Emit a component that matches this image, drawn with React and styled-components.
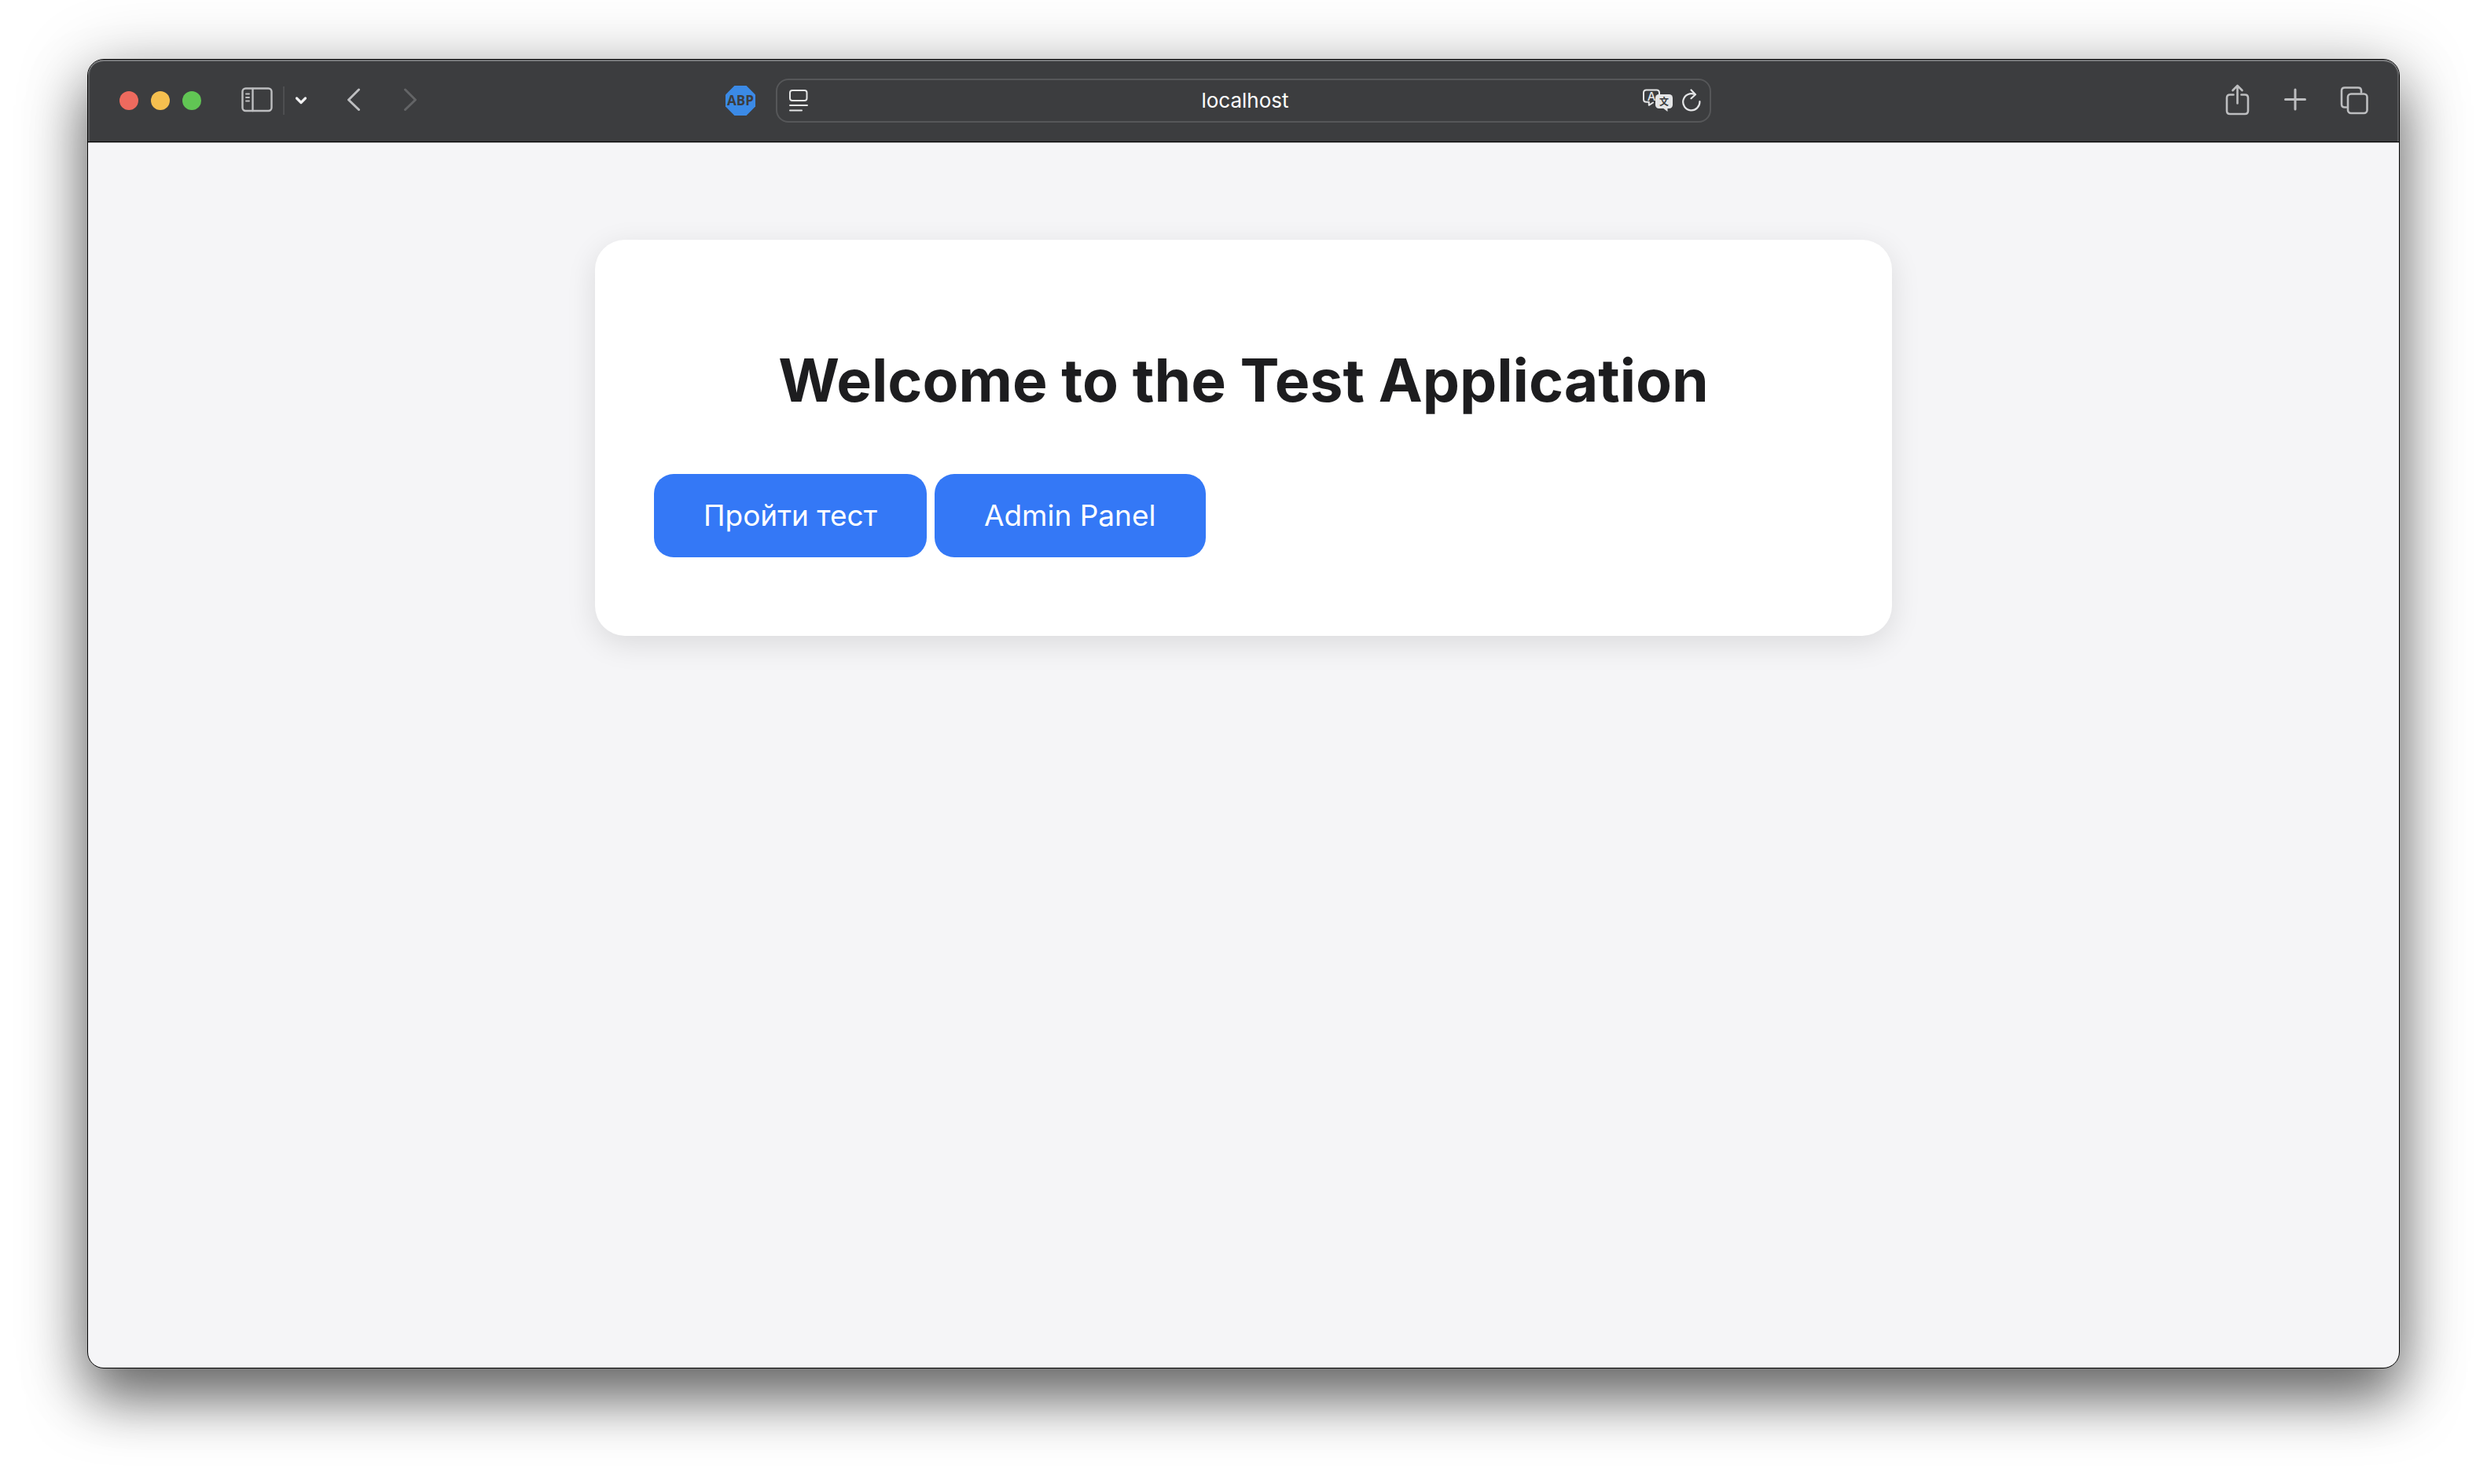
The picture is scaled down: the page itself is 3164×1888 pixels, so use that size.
import React from "react";
import styled, { createGlobalStyle } from "styled-components";

const GlobalStyle = createGlobalStyle`
  * { box-sizing: border-box; }
  body {
    margin: 0;
    background: #ffffff;
    font-family: Inter, "Liberation Sans", sans-serif;
  }
  button, input { font: inherit; }
`;

const Desktop = styled.div`
  display: flex;
  min-height: 100vh;
  padding: 75px 111px 147px;
`;

const Window = styled.div`
  flex: 1;
  display: flex;
  flex-direction: column;
  min-width: 0;
  border: 1px solid #000000;
  border-radius: 21px;
  background: #f5f5f7;
  box-shadow: 0 40px 70px rgba(0, 0, 0, 0.5), 0 10px 90px rgba(0, 0, 0, 0.25);
`;

const Toolbar = styled.header`
  display: grid;
  grid-template-columns: 1fr minmax(0, 1190px) 1fr;
  align-items: center;
  height: 104px;
  border-radius: 20px 20px 0 0;
  background: #3c3d3f;
  color: #bdbec0;
  box-shadow: inset 0 2px 0 #77787a, inset 2px 0 0 #5c5d5f, inset -2px 0 0 #5c5d5f;
`;

const Side = styled.div`
  display: flex;
  align-items: center;
  justify-content: ${(p) => (p.$end ? "flex-end" : "flex-start")};
  padding: ${(p) => (p.$end ? "0 39px 0 0" : "0 26px 0 40px")};
`;

const Lights = styled.div`
  display: flex;
  gap: 16px;
  margin-right: 51px;
`;

const Light = styled.button`
  width: 24px;
  height: 24px;
  padding: 0;
  border: 0;
  border-radius: 50%;
  background: ${(p) => p.$color};
`;

const IconButton = styled.button`
  display: flex;
  align-items: center;
  justify-content: center;
  flex: none;
  width: ${(p) => p.$width}px;
  height: 48px;
  padding: 0;
  border: 0;
  background: none;
  color: ${(p) => p.$color || "inherit"};
  margin-left: ${(p) => p.$gap || 0}px;
`;

const Divider = styled.span`
  width: 2px;
  height: 36px;
  margin: 0 11px 0 13px;
  background: #4e4f51;
`;

const Blocker = styled.button`
  width: 38px;
  height: 38px;
  margin-left: auto;
  padding: 0;
  border: 0;
  background: #3b8ae6;
  color: #3c3d3f;
  clip-path: polygon(30% 0, 70% 0, 100% 30%, 100% 70%, 70% 100%, 30% 100%, 0 70%, 0 30%);
  font: 700 17px/38px "Open Sans", sans-serif;
`;

const AddressBar = styled.div`
  display: grid;
  grid-template-columns: 1fr minmax(0, 600px) 1fr;
  align-items: center;
  height: 56px;
  padding: 0 9px 0 13px;
  border: 2px solid #565759;
  border-radius: 16px;
  color: #e4e5e6;
`;

const Address = styled.input`
  width: 100%;
  padding: 0;
  border: 0;
  outline: 0;
  background: transparent;
  color: #ffffff;
  font-size: 26px;
  line-height: 32px;
  text-align: center;
`;

const AddressActions = styled.div`
  display: flex;
  justify-content: flex-end;
`;

const Page = styled.main`
  flex: 1;
  padding: 124px 75px;
  border-top: 1px solid #000000;
  border-radius: 0 0 20px 20px;
  box-shadow: inset 0 1px 0 #b4b4b6;
`;

const Card = styled.section`
  max-width: 1650px;
  margin: 0 auto;
  padding: 75px 75px 100px;
  border-radius: 38px;
  background: #ffffff;
  box-shadow: 0 10px 38px rgba(0, 0, 0, 0.11);
`;

const Title = styled.h1`
  margin: 56px 0 71px;
  color: #1d1d1f;
  font-size: 75px;
  font-weight: 700;
  line-height: 96px;
  text-align: center;
`;

const Actions = styled.div`
  display: flex;
  flex-wrap: wrap;
  gap: 10px;
`;

const ActionButton = styled.button`
  height: 106px;
  padding: 0 63px;
  border: 0;
  border-radius: 25px;
  background: #3478f6;
  color: #ffffff;
  font-size: 37px;
  line-height: 48px;
`;

const Svg = ({ w, h, s = 2, children }) => (
  <svg width={w} height={h} viewBox={`0 0 ${w} ${h}`} fill="none" stroke="currentColor"
    strokeWidth={s} strokeLinecap="round" strokeLinejoin="round" aria-hidden="true">
    {children}
  </svg>
);

const SidebarIcon = () => (
  <Svg w={40} h={34} s={2.4}>
    <rect x="1.5" y="1.500" width="37" height="28.5" rx="4" />
    <path d="M14.5 2v28" />
    <path d="M6 8.5h4M6 13h4M6 17.5h4" strokeWidth="1.8" />
  </Svg>
);

const ChevronDown = () => (
  <Svg w={16} h={12} s={3.2}><path d="M2.5 3l5.5 5.5L13.5 3" /></Svg>
);

const Back = () => <Svg w={18} h={32} s={3}><path d="M15.5 2L2.5 15l13 12.5" /></Svg>;
const Forward = () => <Svg w={18} h={32} s={3}><path d="M2.5 2l13 13-13 12.5" /></Svg>;

const ReaderIcon = () => (
  <Svg w={24} h={30}>
    <rect x="1" y="2" width="21.5" height="13" rx="3" />
    <path d="M1 21h22M1 27.5h15" />
  </Svg>
);

const TranslateIcon = () => (
  <Svg w={40} h={32}>
    <path d="M14 18.5L8.8 21.8V17.8H5.5Q2 17.8 2 14.3V6Q2 2.5 5.5 2.5H18.5Q22 2.5 22 6V8" />
    <rect x="17" y="8" width="22" height="18" rx="4.5" fill="currentColor" stroke="none" />
    <path d="M26 25l6.5 5v-5z" fill="currentColor" stroke="none" />
    <text x="12" y="15.5" textAnchor="middle" fill="currentColor" stroke="none"
      fontFamily="Inter, sans-serif" fontSize="15" fontWeight="500">A</text>
    <text x="28" y="21.5" textAnchor="middle" fill="#3c3d3f" stroke="none"
      fontFamily="'Noto Sans CJK SC', sans-serif" fontSize="12" fontWeight="700">文</text>
  </Svg>
);

const ReloadIcon = () => (
  <Svg w={24} h={30} s={2.2}>
    <path d="M22.4 16.2A10.6 10.6 0 1 1 16 7" />
    <path d="M11.5 1.5L17 7.2l-5.500 5" />
  </Svg>
);

const ShareIcon = () => (
  <Svg w={32} h={42} s={2.6}>
    <path d="M10.5 13.5H6q-4 0-4 4V34q0 4 4 4H25q4 0 4-4V17.5q0-4-4-4H20.500" />
    <path d="M15.500 24.5V2.5M9.500 8L15.500 2l6 6" />
  </Svg>
);

const PlusIcon = () => <Svg w={30} h={32} s={3}><path d="M15 2v25M2.500 14.500h25" /></Svg>;

const TabsIcon = () => (
  <Svg w={36} h={38} s={2.6}>
    <path d="M8 27.500H6q-4 0-4-4V6.500q0-4 4-4H23q4 0 4 4V8.500" />
    <rect x="10" y="10.500" width="24.500" height="24.500" rx="4" />
  </Svg>
);

export default function App() {
  return (
    <>
      <GlobalStyle />
      <Desktop>
        <Window>
          <Toolbar>
            <Side>
              <Lights>
                <Light $color="#ed6a5e" aria-label="Close" />
                <Light $color="#f5bf4f" aria-label="Minimize" />
                <Light $color="#61c554" aria-label="Zoom" />
              </Lights>
              <IconButton $width={40} aria-label="Sidebar"><SidebarIcon /></IconButton>
              <Divider />
              <IconButton $width={20} $color="#f0f0f1" aria-label="Tab groups"><ChevronDown /></IconButton>
              <IconButton $width={20} $gap={47} aria-label="Back"><Back /></IconButton>
              <IconButton $width={20} $gap={52} $color="#636466" aria-label="Forward"><Forward /></IconButton>
              <Blocker aria-label="Ad blocker">ABP</Blocker>
            </Side>
            <AddressBar>
              <IconButton $width={28} $color="#e4e5e6" aria-label="Reader"><ReaderIcon /></IconButton>
              <Address aria-label="Address" defaultValue="localhost" />
              <AddressActions>
                <IconButton $width={40} aria-label="Translate"><TranslateIcon /></IconButton>
                <IconButton $width={28} $gap={9} aria-label="Reload"><ReloadIcon /></IconButton>
              </AddressActions>
            </AddressBar>
            <Side $end>
              <IconButton $width={32} aria-label="Share"><ShareIcon /></IconButton>
              <IconButton $width={30} $gap={42} aria-label="New tab"><PlusIcon /></IconButton>
              <IconButton $width={36} $gap={42} aria-label="Tab overview"><TabsIcon /></IconButton>
            </Side>
          </Toolbar>
          <Page>
            <Card>
              <Title>Welcome to the Test Application</Title>
              <Actions>
                <ActionButton>Пройти тест</ActionButton>
                <ActionButton>Admin Panel</ActionButton>
              </Actions>
            </Card>
          </Page>
        </Window>
      </Desktop>
    </>
  );
}
